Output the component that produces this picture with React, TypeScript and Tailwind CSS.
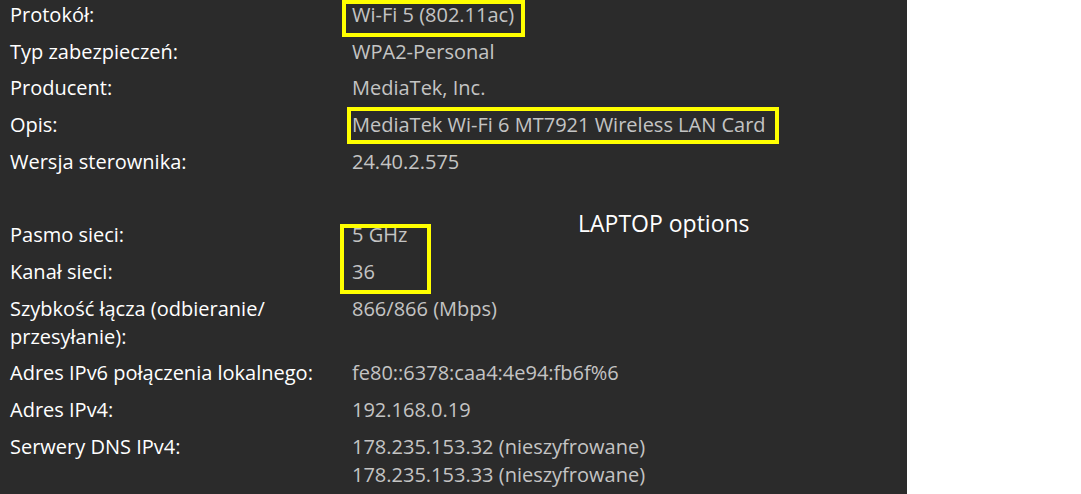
const rows: { label: string[]; value: string[] }[] = [
  { label: ["Protokół:"], value: ["Wi-Fi 5 (802.11ac)"] },
  { label: ["Typ zabezpieczeń:"], value: ["WPA2-Personal"] },
  { label: ["Producent:"], value: ["MediaTek, Inc."] },
  { label: ["Opis:"], value: ["MediaTek Wi-Fi 6 MT7921 Wireless LAN Card"] },
  { label: ["Wersja sterownika:"], value: ["24.40.2.575"] },
  { label: [""], value: [""] },
  { label: ["Pasmo sieci:"], value: ["5 GHz"] },
  { label: ["Kanał sieci:"], value: ["36"] },
  { label: ["Szybkość łącza (odbieranie/", "przesyłanie):"], value: ["866/866 (Mbps)"] },
  { label: ["Adres IPv6 połączenia lokalnego:"], value: ["fe80::6378:caa4:4e94:fb6f%6"] },
  { label: ["Adres IPv4:"], value: ["192.168.0.19"] },
  { label: ["Serwery DNS IPv4:"], value: ["178.235.153.32 (nieszyfrowane)", "178.235.153.33 (nieszyfrowane)"] },
];

export default function App() {
  return (
    <div className="flex h-[494px] w-[1081px] overflow-hidden bg-white font-['Open_Sans','Noto_Sans',sans-serif]">
      <div className="relative h-full w-[907px] bg-[#2b2b2b] pl-[10px] pt-[1px]">
        <div className="flex flex-col gap-[8.7px] text-[20px] leading-[28px]">
          {rows.map((r, i) => (
            <div key={i} className="flex min-h-[28px]">
              <div className="w-[342px] shrink-0 text-white">
                {r.label.map((l, j) => (
                  <div key={j}>{l}</div>
                ))}
              </div>
              <div className="text-[#c4c4c4]">
                {r.value.map((v, j) => (
                  <div key={j}>{v}</div>
                ))}
              </div>
            </div>
          ))}
        </div>

        {/* annotations drawn over the screenshot */}
        <div className="absolute left-[578px] top-[208px] text-[23px] leading-[30px] text-white">LAPTOP options</div>
        <div className="absolute left-[342px] top-0 h-[37px] w-[183px] border-4 border-[#ffff00]" />
        <div className="absolute left-[347px] top-[107px] h-[37px] w-[432px] border-4 border-[#ffff00]" />
        <div className="absolute left-[340px] top-[224px] h-[70px] w-[91px] border-4 border-[#ffff00]" />
      </div>
    </div>
  );
}
